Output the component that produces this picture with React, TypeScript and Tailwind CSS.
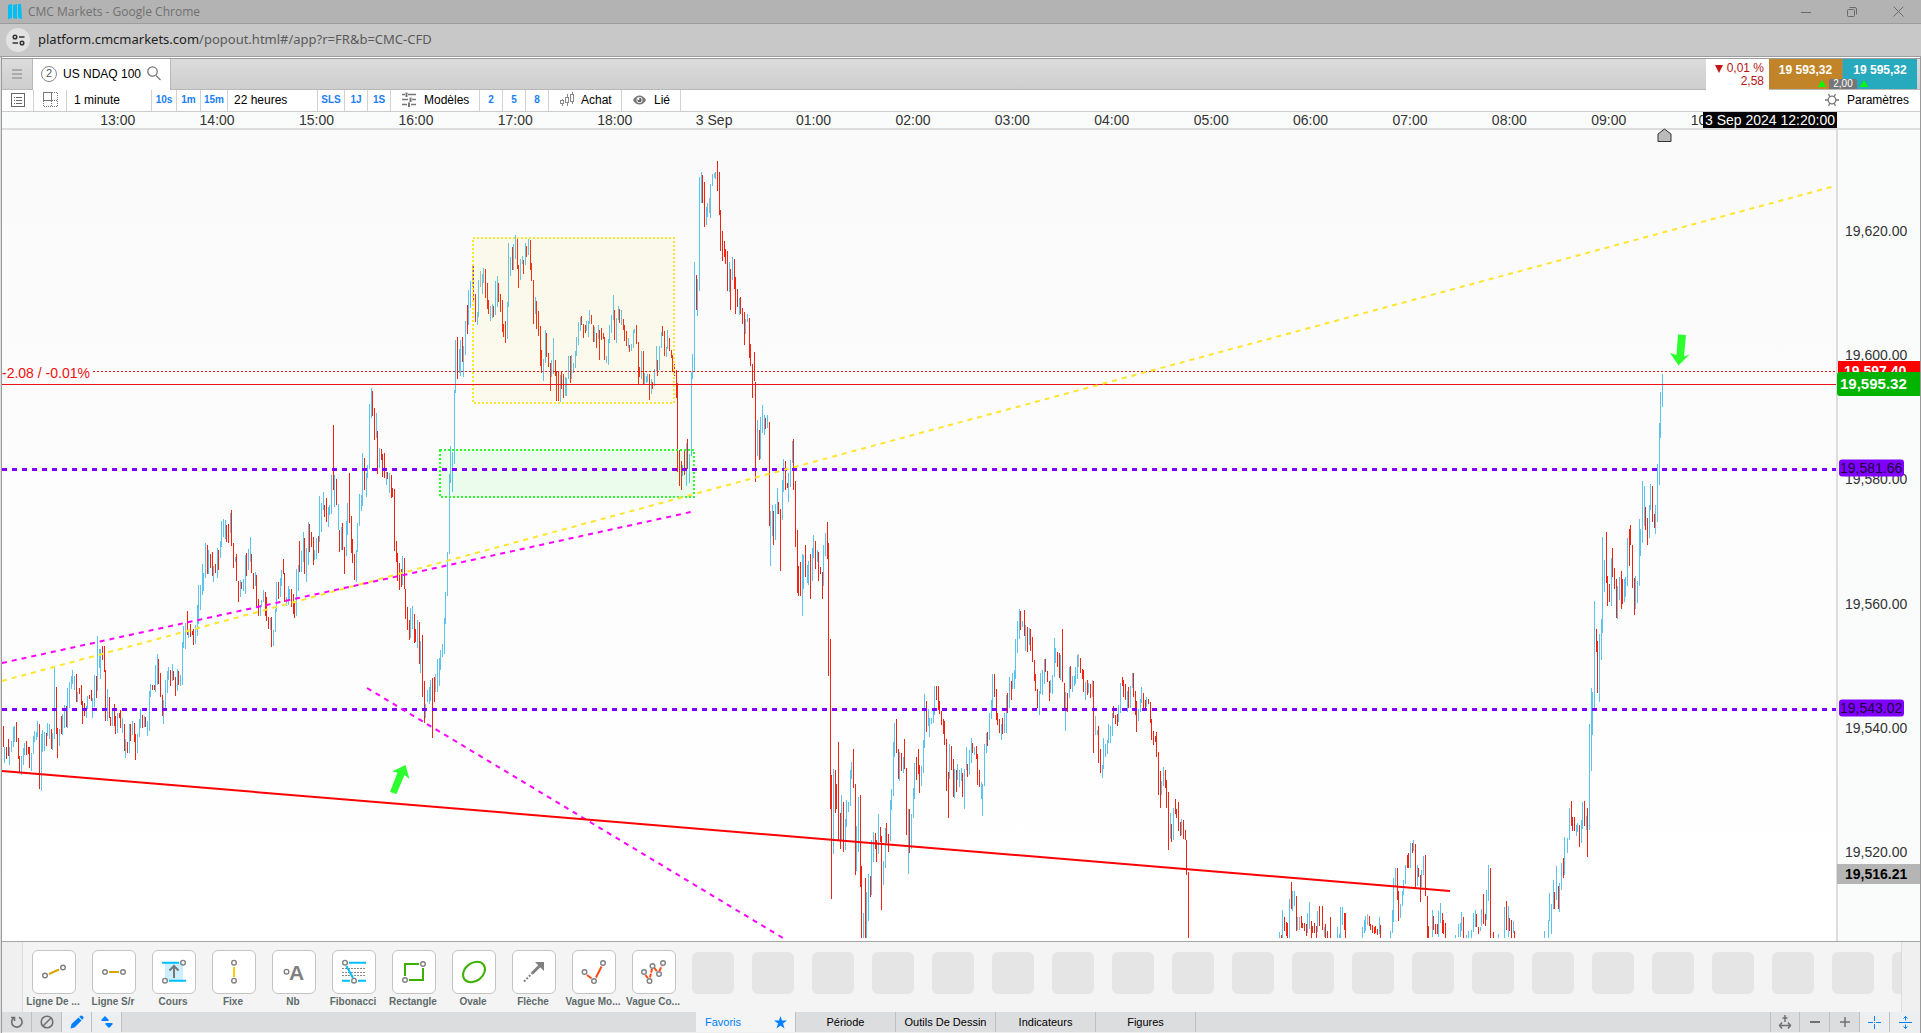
import React from "react";

type Block = { x: number; y: number; sx: number; sy: number; bars: string };

const BLOCKS: Block[] = [
  {
    x: 0, y: 360, sx: 3, sy: 3,
    bars: `d10 1098 1160; u13 1160 1208; d19 1161 1196; d25 1138 1187; u28 1160 1214; u34 1143 1176; u40 1101 1160; u43 1098 1147; d49 1086 1145; d55 1134 1196; d58 1188 1236; u64 1188 1244; u70 1163 1215; u73 1150 1185; d79 1144 1185; d85 1160 1182; d88 1161 1224; u94 1179 1232; u100 1128 1182; u103 1113 1145; u109 1116 1140; u112 1083 1131; d118 1092 1287; u124 1122 1293; u127 1110 1176; u133 1116 1173; d139 1119 1158; u142 1089 1128; u148 1092 1137; d154 1107 1166; u157 1119 1169; u163 923 1137; d169 981 1122; d172 1104 1194; u178 1107 1158; d184 1068 1122; u187 1062 1125; u193 1035 1104; d199 1038 1101; u202 984 1104; u208 966 1043; u214 948 987; u217 930 972; u223 948 990; d229 942 1026; u232 995 1026; d238 984 1002; d244 975 1034; d247 1024 1092; d253 1029 1068; u259 1038 1074; u262 1008 1046; d268 1005 1016; d274 990 1022; u277 1014 1074; u283 945 1041; d289 948 1014; u292 828 994; u298 867 924; u301 867 957; d307 858 900; d313 858 936; d316 930 1083; u322 987 1083; d328 1011 1074; d331 1071 1098; u337 1047 1098; d343 1032 1098; d346 1068 1122; u352 1060 1118; d358 1059 1075; d361 1050 1103; u367 1074 1119; d373 1092 1173; u376 1137 1194; d382 1146 1179; u388 1092 1179; d391 1092 1143; u397 1083 1125; d403 1089 1145; d406 1122 1200; u412 1122 1179; u418 1077 1131; u421 1047 1104; d427 1065 1104; u433 1068 1100; d436 1071 1101; u442 1083 1128; u448 993 1113; u451 972 1010; d457 975 991; d463 975 990; u466 915 996; u472 882 975; d475 897 972; d481 939 1011; d487 1005 1068; u490 1020 1092; u496 960 1046; u502 933 999; u505 921 959; d511 930 978; u517 912 963; d520 933 960; d526 951 1008; u532 927 993; d535 933 975; u541 945 978; u547 846 975; u550 797 864; u556 790 867; d562 753 825; u565 816 834; d571 792 831; d577 813 825; d580 807 855; u586 795 852; u592 735 828; u595 675 792; u601 675 750; u607 612 705; u610 639 693; u616 549 654; d622 555 642; u625 570 642; d631 582 624; d637 576 648; u640 618 666; d646 612 639; u652 564 654; d655 570 630; u661 543 594; u664 483 561; u670 477 531; u676 480 537; d679 495 546; d685 492 549; u691 459 519; d694 450 558; d700 549 624; u706 590 606; d709 582 663; d715 663 726; u721 660 711; d724 666 687; u730 657 693; u736 585 702; d739 579 648; u745 567 630; u751 531 606; d754 582 640; d760 639 687; u766 636 678; d769 645 738; d775 717 768; u781 735 768; u784 720 741; u790 690 726; d796 697 769; d799 711 783; d805 771 807; u811 775 810; d814 771 861; u820 810 858; u826 747 816; u829 666 756; d835 666 717; u841 654 711; u844 630 678; d850 597 642; d853 640 726; u859 711 738; u865 678 735; u868 687 720; d874 687 741; d880 702 762; d883 726 774; u889 627 768; u895 615 693; d898 543 636; u904 573 636; u910 516 606; d913 534 642; u919 564 666; u925 486 615; d928 492 576; d934 516 561; d940 531 615; u943 570 600; u949 534 597; d955 528 579; u958 408 546; u964 429 516; u970 396 450; d973 435 471; d979 414 486; u985 441 501; u988 435 465; u994 345 462; d1000 195 390; u1003 345 441; d1009 357 435; u1015 432 510; d1018 510 576; u1024 500 570; d1027 489 570; d1033 561 642; u1039 483 588; u1042 429 525; d1048 339 489; d1054 468 579; d1057 537 609; d1063 582 660; u1069 570 666; u1072 489 576; u1078 402 498; u1084 405 453; u1087 279 438; d1093 294 390; u1099 339 411; u1102 315 354; u1108 132 327; u1114 84 174; d1117 93 168; d1123 144 240; u1129 159 234; d1132 213 342; u1138 264 324; d1144 267 300; d1147 282 351; d1153 279 354; u1159 336 375; d1162 336 357; u1168 339 399; d1174 345 414; d1177 384 411; d1183 387 573; d1189 543 606; d1192 579 663; d1198 609 690; d1204 627 681; u1207 588 675; d1213 594 687; d1216 687 777; d1222 741 810; d1228 780 840; u1231 744 834; u1237 738 807; d1243 762 849; d1246 807 846; u1252 780 864; d1258 786 912; u1261 843 939; d1267 825 1011; d1273 963 1089; u1276 1032 1074; u1282 990 1026; u1288 981 1032; u1291 960 1022; d1297 954 1134; d1303 951 1026; g1306 942 996; u1312 897 996; u1318 894 978; u1321 870 930; u1327 852 891; u1333 774 882; u1336 696 792; u1342 576 708`,
  },
  {
    x: 430, y: 150, sx: 3, sy: 3,
    bars: `u58 972 1212; u61 888 998; u67 906 1026; u73 720 942; u76 570 729; d82 561 687; u88 597 669; u91 570 678; d97 561 636; u100 588 681; u106 513 615; d112 465 552; u115 420 525; u121 393 474; u127 348 411; d130 348 450; d136 432 516; u142 486 525; u145 390 500; g151 363 411; u157 372 432; u160 354 399; d166 357 444; d172 399 477; d175 450 492; u181 468 513; u187 462 504; d190 468 501; u196 393 495; u202 378 471; d205 399 456; d211 432 486; d217 450 546; d220 522 561; d226 513 579; u232 456 567; u235 279 471; u241 321 378; d247 291 360; u250 282 360; u256 255 327; d262 267 357; d265 345 414; u271 327 390; u277 318 342; d280 330 372; u286 279 345; d289 288 321; u295 267 315; d301 270 360; d304 339 393; d310 390 522; u316 441 492; d319 453 537; d325 483 558; d331 528 648; d334 600 669; u340 627 693; u346 540 639; d349 549 621; d355 609 651; d361 639 723; u364 630 681; u370 564 672; d376 630 678; d379 663 753; d385 666 753; u391 675 756; d394 666 717; d400 672 744; u406 681 738; u409 684 738; u415 618 687; d421 618 699; u424 615 687; u430 639 669; u436 603 654; u439 561 618; u445 516 585; u451 501 543; d454 498 525; d460 522 564; d466 525 549; u469 513 543; u475 513 561; u478 480 522; d484 495 522; d490 525 576; u493 531 576; d499 549 594; u505 525 567; d508 540 630; d514 534 570; d520 549 567; d523 561 630; u529 618 639; u535 567 645; u538 525 579; u544 495 549; u550 435 510; d553 480 570; u559 504 579; u565 468 510; d568 477 519; u574 480 525; d580 507 540; d583 525 573; d589 543 588; u595 564 594; d598 585 606; u604 582 603; u610 540 594; u613 537 549; d619 525 582; d625 576 702; d628 651 681; u634 603 687; d640 603 702; u643 669 702; u649 678 699; u652 672 696; d658 672 750; u664 687 732; d667 696 717; u673 657 708; u679 588 663; d682 630 678; u688 588 660; u694 546 594; d697 528 558; d703 543 618; u709 591 621; u712 540 597; d718 564 603; d724 600 624; d727 615 666; d733 642 678; d739 660 744; d742 699 966; d748 900 1008; d754 933 1020; u757 945 978; d763 900 975; u769 879 1008; d772 867 957; u778 912 999; u784 666 918; u787 612 687; u793 336 666; d799 375 480; u802 387 498; u808 81 423; u814 66 159; d817 75 159; d823 96 231; u829 171 225; u832 159 201; g838 144 189; u841 102 204; u847 72 108; g853 69 84; u856 66 87; d862 33 123; d868 66 195; d871 180 303; d877 243 333; d883 273 321; d886 297 342; d892 303 423; u898 336 426; d901 357 480; u907 321 390; d913 327 417; d916 381 492; d922 417 471; u928 444 495; d931 441 492; d937 474 522; d943 486 585; u946 507 552; u952 492 516; d958 504 624; d961 582 648; d967 642 744; d973 606 693; d976 696 996; u982 846 918; d988 849 930; u991 801 927; u997 765 849; u1003 795 855; d1006 804 837; u1012 795 834`,
  },
  {
    x: 700, y: 440, sx: 2.8, sy: 3,
    bars: `u154 -54 48; d156 -54 126; u162 -60 48; d167 -30 60; u170 -30 57; d195 -54 258; u198 213 378; u203 195 288; d206 213 315; u212 192 300; u217 144 222; d220 186 222; d226 207 393; u231 120 240; u234 57 156; d240 63 150; d245 129 144; u248 99 186; u254 60 141; u259 3 69; d262 -3 150; d268 123 321; d273 270 459; d276 378 468; d282 366 468; u287 342 528; u290 345 447; d296 315 411; u302 375 429; u304 363 435; d310 342 477; u315 324 423; u318 285 354; d324 303 387; u329 330 366; d332 336 423; d338 381 402; d343 396 477; u346 315 438; u352 279 348; d357 246 357; d360 309 708; d366 597 1107; d369 1005 1377; u374 987 1242; d380 990 1119; d383 1032 1107; d388 906 1200; d394 1119 1227; u397 1065 1200; d402 1086 1236; u408 1137 1230; u411 1080 1161; u416 1086 1116; u422 990 1098; u425 966 1017; d430 927 1044; d436 1032 1305; u439 1158 1293; u444 1071 1236; d450 1065 1341; d453 1278 1494; u458 1419 1494; d464 1314 1494; u467 1356 1494; u472 1302 1443; d478 1308 1371; u481 1200 1365; u486 1176 1266; d492 1179 1227; d495 1200 1266; u500 1122 1242; d506 1161 1206; d509 1188 1410; u514 1263 1335; u520 1164 1284; d523 1149 1209; d528 1182 1236; u534 1080 1203; u537 1047 1110; u542 906 1068; u545 849 951; d551 837 939; d556 927 1017; u559 936 1023; d565 939 993; u570 951 999; d573 897 987; d579 984 1185; u584 1107 1302; d587 1107 1239; u593 1122 1227; u598 1044 1134; u601 969 1077; d607 951 1020; d612 927 1002; d615 975 1059; u621 978 1038; u626 900 999; u629 762 924; d635 783 876; u640 807 858; u643 834 891; u649 834 852; u654 813 849; u657 738 825; d663 738 780; d668 738 810; d671 783 822; d677 813 855; d682 837 882; d685 843 915; d691 897 1053; d696 996 1134; u699 912 1017; d705 918 990; d710 957 1071; u713 987 1074; d719 990 1056; u721 972 1020; u727 990 1041; u733 984 1023; d735 999 1071; u741 987 1107; u747 921 990; d749 972 1011; u755 930 1005; u761 894 969; d763 909 939; u769 921 945; d775 918 957; d777 942 1035; d783 990 1041; u789 1026 1077; u791 1032 1128; u797 912 1038; u803 879 939; d805 876 918; u811 819 900; u817 780 837; u820 702 804; d825 702 771; d831 747 840; d833 819 855; d839 837 879; u845 852 900; d847 834 882; u853 819 879; u859 765 879; d861 759 819; u867 711 804; d873 723 780; u875 699 747; u881 690 747; u884 597 717; u889 543 639; u895 507 597; d898 513 570; u903 543 561; d909 510 588; u912 555 633; d917 561 636; u923 564 615; d926 567 633; d931 591 666; d937 660 723; d940 702 753; d945 747 804; u951 753 825; u954 699 762; u959 690 765; u965 657 732; d968 657 696; d973 693 726; d979 723 783; u982 720 759; u987 705 762; u993 594 711; u996 624 669; d1001 636 681; d1007 639 714; u1010 645 720; d1015 567 726; d1021 729 807; u1024 756 873; d1029 759 816; u1035 681 774; d1038 678 747; u1043 708 756; u1049 708 738; u1052 681 732; u1057 645 717; g1060 642 681; d1066 654 699; d1071 687 717; d1074 690 756; u1080 726 780; d1085 720 765; u1088 729 759; d1094 732 774; g1099 720 770; d1102 723 939; g1108 828 885; u1113 870 886; d1116 858 969; d1122 927 999; u1127 975 1014; u1130 894 987; u1136 912 951; u1141 900 942; u1144 852 909; u1150 858 909; u1155 819 888; d1158 798 834; d1164 825 852; d1169 822 858; u1172 795 846; u1178 729 819; d1183 711 738; d1186 720 771; d1192 732 780; u1197 753 816; d1200 741 804; u1206 738 804; u1211 699 744; d1214 699 771; d1220 753 825; d1222 783 876; u1228 807 843; u1234 777 816; u1237 741 789; d1242 759 804; d1248 780 810; u1250 771 801; d1256 777 792; d1262 786 849; d1265 837 900; d1270 873 915; d1276 888 906; d1279 876 951; d1284 936 1065; d1290 993 1104; u1293 1023 1065; u1298 981 1038; d1304 990 1044; d1307 1020 1104; d1312 1056 1230; u1318 1119 1197; d1321 1152 1206; u1326 1104 1200; d1332 1077 1122; d1335 1107 1134; d1340 1086 1173; d1346 1146 1188; u1349 1137 1185; d1354 1140 1197; d1360 1170 1200; d1363 1200 1305; d1368 1296 1494`,
  },
  {
    x: 1240, y: 340, sx: 2.3025, sy: 2.6133,
    bars: `u91 1547 1563; d96 1554 1563; u98 1490 1563; d102 1508 1544; d107 1522 1557; d110 1523 1563; u114 1461 1563; d118 1416 1487; u121 1440 1492; u126 1440 1479; d130 1453 1544; u133 1508 1542; g137 1508 1542; d142 1505 1537; d144 1523 1537; d149 1524 1544; d153 1526 1557; u156 1497 1550; u160 1469 1539; d165 1518 1563; d167 1531 1550; d172 1524 1550; d177 1531 1563; u179 1492 1547; d184 1479 1531; d190 1479 1542; u194 1534 1560; d197 1526 1563; d202 1544 1563; d209 1508 1563; u225 1534 1563; u229 1552 1563; u232 1482 1563; u236 1482 1529; d240 1497 1542; d243 1497 1563; u282 1534 1563; u286 1516 1550; u289 1505 1544; g293 1500 1530; d298 1505 1531; d300 1526 1542; d305 1529 1550; d310 1534 1552; d312 1531 1550; d317 1539 1555; u321 1508 1552; d323 1529 1563; u347 1544 1563; u351 1490 1550; u354 1406 1521; u358 1380 1430; d362 1380 1463; d365 1440 1518; u370 1474 1511; u374 1440 1480; u377 1411 1450; u381 1372 1422; d386 1346 1380; d388 1341 1380; u393 1315 1380; d397 1315 1341; u400 1307 1336; d404 1317 1430; u408 1372 1427; d411 1380 1403; d416 1398 1469; u419 1385 1430; u423 1348 1398; d427 1346 1453; d432 1453 1563; d434 1531 1563; u444 1490 1560; d446 1505 1543; d450 1526 1552; d455 1526 1552; u457 1492 1560; u462 1471 1524; d467 1497 1550; d469 1516 1552; d474 1524 1563; u497 1555 1563; u503 1526 1560; u507 1523 1560; u510 1495 1545; d515 1508 1563; u521 1555 1563; u526 1544 1563; u533 1542 1563; u538 1497 1547; u542 1490 1534; d545 1500 1535; d549 1534 1552; u553 1534 1545; u556 1487 1532; d561 1448 1526; d565 1500 1531; u568 1437 1516; u572 1372 1466; d577 1380 1563; d584 1548 1563; u595 1552 1563; u609 1482 1563; d614 1466 1542; u618 1479 1560; d621 1511 1544; d625 1516 1563; u630 1518 1550; d632 1544 1563; u702 1544 1563; u711 1516 1563; u713 1445 1518; u717 1474 1552; u722 1411 1487; d724 1443 1487; u729 1375 1463; d733 1427 1487; u736 1419 1495; u740 1367 1437; d745 1354 1406; u747 1299 1398; u753 1301 1341; u759 1223 1307; d763 1205 1270; d765 1247 1283; d770 1247 1283; u775 1268 1296; u777 1262 1286; d782 1268 1325; u786 1255 1315; u789 1207 1278; d793 1205 1270; u798 1244 1281; d800 1223 1351; u805 1004 1281; u809 909 1126; u812 920 1032; u816 682 966; d821 755 815; d823 787 923; u828 768 945; u832 729 836; u835 515 766; u839 575 659; d844 502 635; d846 617 695; d851 638 685; u855 570 695; d858 544 619; d862 596 651; d867 625 727; u869 643 729; u874 619 679; d879 604 703; d881 625 690; u886 625 685; u888 619 672; u892 517 643; d897 494 591; d899 483 536; d904 536 648; d908 622 719; u911 617 703; u915 630 687; u920 468 643; u922 494 564; u927 368 531; u931 382 486; d934 436 497; d938 465 536; u943 431 517; u945 376 444; d950 382 476; d954 455 491; u957 431 507; u961 324 476; u966 217 379; u968 136 256; u973 89 175`,
  },
];

const TOP = 130;
const HEIGHT = 811;

function barsPath(kind: string) {
  return BLOCKS.map((b) =>
    b.bars
      .split(";")
      .map((s) => s.trim())
      .filter((s) => s[0] === kind)
      .map((s) => {
        const [x, a, z] = s.slice(1).split(" ").map(Number);
        const px = Math.floor(b.x + x / b.sx) + 0.5;
        return `M${px} ${Math.round(b.y + a / b.sy)}V${Math.round(b.y + z / b.sy)}`;
      })
      .join("")
  ).join("");
}

const yOf = (price: number) => 355 + (19600 - price) * 6.21;
const pct = (y: number) => `${((y - TOP) / HEIGHT) * 100}%`;

const HOURS = ["13:00", "14:00", "15:00", "16:00", "17:00", "18:00", "3 Sep", "01:00", "02:00", "03:00", "04:00", "05:00", "06:00", "07:00", "08:00", "09:00", "10:00"];
const TICKS = ["19,620.00", "19,600.00", "19,580.00", "19,560.00", "19,540.00", "19,520.00"];

function Chart() {
  return (
    <svg className="block h-full w-full overflow-visible" viewBox={`2 ${TOP} 1834 ${HEIGHT}`} preserveAspectRatio="none" fill="none" role="img" aria-label="US NDAQ 100">
      <g shapeRendering="crispEdges">
        <path d={barsPath("u")} stroke="#5cc3ec" />
        <path d={barsPath("d")} stroke="#f02410" />
        <path d={barsPath("g")} stroke="#b4b4b4" />
        <rect x="473" y="238" width="201" height="165" fill="#ffe62e" fillOpacity="0.08" stroke="#ffe62e" strokeWidth="2" strokeDasharray="2 2" />
        <rect x="440" y="450" width="254" height="47" fill="#2eff2e" fillOpacity="0.08" stroke="#2eff2e" strokeWidth="2" strokeDasharray="2 2" />
        <path d="M93 371.5H1836" stroke="#e01515" strokeDasharray="2 2" />
        <path d="M2 384.5H1836" stroke="#e8151b" />
        <path d="M2 469.5H1836M2 709.5H1836" stroke="#8000ff" strokeWidth="3" strokeDasharray="5 5" />
      </g>
      <path d="M2 681L1835 186" stroke="#ffe62e" strokeWidth="2" strokeDasharray="5 5" />
      <path d="M2 663L691 512M367 688L783 938" stroke="#ff00ff" strokeWidth="2" strokeDasharray="5 5" />
      <path d="M2 771L1450 891" stroke="#ff0000" strokeWidth="2" />
      <path d="M405.500 765L392 771.500L397.500 772.500L390 792L396.500 794L404.500 775L409.500 779Z" fill="#2eff2e" />
      <path d="M1678.500 365.500L1670 353L1676.500 355L1678 334.500L1686 335L1684 356.500L1689.500 354.500Z" fill="#2eff2e" />
      <path d="M1658 141.500V134L1664.500 129L1671 134V141.500Z" fill="#bbbbbb" stroke="#333" />
    </svg>
  );
}

const sep = "border-r border-[#d2d2d2]";
const cell = "flex h-full shrink-0 items-center whitespace-nowrap pb-0.5";
const quick = "justify-center text-[10px] font-bold text-[#1a80f5]";

function Toolbar() {
  return (
    <div className="flex h-[22px] items-stretch border-b border-[#cccccc] bg-white text-xs text-black">
      <button aria-label="Liste" className={`${cell} ${sep} w-8 justify-center`}>
        <svg width="14" height="14" viewBox="0 0 14 14" fill="none" stroke="#666" shapeRendering="crispEdges">
          <path d="M.5 .5H13.500V13.500H.5ZM3 4.500H4M5 4.500H11M3 7.500H4M5 7.500H11M3 10.500H4M5 10.500H11" />
        </svg>
      </button>
      <button aria-label="Disposition" className={`${cell} ${sep} w-[33px] justify-center`}>
        <svg width="15" height="15" viewBox="0 0 15 15" fill="none" stroke="#777" shapeRendering="crispEdges">
          <path d="M.5 .5H8.500V8.500H.5Z" />
          <path d="M9 .5H14.500V14.500H.5V9M8.500 9V14M9 8.500H14" strokeDasharray="1 1" />
        </svg>
      </button>
      <button className={`${cell} ${sep} w-[85px] pl-[7px]`}>1 minute</button>
      <button className={`${cell} ${sep} ${quick} w-[25px]`}>10s</button>
      <button className={`${cell} ${sep} ${quick} w-6`}>1m</button>
      <button className={`${cell} ${sep} ${quick} w-[27px]`}>15m</button>
      <button className={`${cell} ${sep} w-[90px] pl-1.5`}>22 heures</button>
      <button className={`${cell} ${sep} ${quick} w-[27px]`}>SLS</button>
      <button className={`${cell} ${sep} ${quick} w-[23px]`}>1J</button>
      <button className={`${cell} ${sep} ${quick} w-[23px]`}>1S</button>
      <button className={`${cell} ${sep} w-[89px] gap-2 pl-[11px]`}>
        <svg width="14" height="15" viewBox="0 0 14 15" fill="none" stroke="#777" strokeWidth="2">
          <path d="M0 2.500H3M6 2.500H14M0 7.500H6M10 7.500H14M0 12.500H5M9 12.500H14" strokeWidth="1.500" />
          <path d="M4.500 .5V5M8.500 5.500V10M7 10.500V15" />
        </svg>
        Modèles
      </button>
      <button className={`${cell} ${sep} ${quick} w-[23px]`}>2</button>
      <button className={`${cell} ${sep} ${quick} w-[23px]`}>5</button>
      <button className={`${cell} ${sep} ${quick} w-[23px]`}>8</button>
      <button className={`${cell} ${sep} w-[73px] gap-1.5 pl-[11px]`}>
        <svg width="15" height="15" viewBox="0 0 15 15" fill="none" stroke="#888" shapeRendering="crispEdges">
          <path d="M.5 8.500H3.500V11.500H.5ZM5.500 5.500H8.500V10.500H5.500ZM10.500 2.500H13.500V9.500H10.500ZM2.500 7V8M2.500 12V14M7.500 2V5M7.500 11V14M12.500 0V2M12.500 10V12" />
        </svg>
        Achat
      </button>
      <button className={`${cell} ${sep} w-[59px] gap-2 pl-[11px]`}>
        <svg className="shrink-0" width="13" height="10" viewBox="0 0 13 10">
          <path d="M0 5C3 -1 10 -1 13 5C10 11 3 11 0 5Z" fill="#777" />
          <circle cx="6.500" cy="5" r="3" fill="#fff" />
          <circle cx="6.500" cy="5" r="2.200" fill="#666" />
          <circle cx="5.500" cy="4" r="1" fill="#fff" />
        </svg>
        Lié
      </button>
      <button className={`${cell} ml-auto gap-2 pr-[11px]`}>
        <svg width="14" height="14" viewBox="0 0 14 14" fill="none" stroke="#777" strokeWidth="1.300">
          <circle cx="7" cy="7" r="3.800" />
          <path d="M0 7H3M11 7H14M3.500 1L5 4M10.500 1L9 4M3.500 13L5 10M10.500 13L9 10" />
        </svg>
        Paramètres
      </button>
    </div>
  );
}

function Dot({ x, y }: { x: number; y: number }) {
  return <circle cx={x} cy={y} r="2.300" stroke="#808080" strokeWidth="1.400" />;
}

const TOOLS: { label: string; icon: React.ReactNode }[] = [
  { label: "Ligne De ...", icon: <><Dot x={13} y={25.5} /><Dot x={31} y={17.5} /><path d="M17 24L27 19.500" stroke="#dba400" /></> },
  { label: "Ligne S/r", icon: <><Dot x={13} y={22} /><Dot x={31} y={22} /><path d="M17 22H27" stroke="#dba400" /></> },
  {
    label: "Cours",
    icon: <><path d="M13 13H31V30H13Z" fill="#ccefff" /><path d="M10 12.700H27M17 30.700H34" stroke="#00bfff" /><Dot x={31} y={12.7} /><Dot x={13} y={30.7} /><path d="M22 28V16M17.500 20.500L22 16L26.500 20.500" stroke="#777" /></>,
  },
  { label: "Fixe", icon: <><Dot x={22} y={12.7} /><Dot x={22} y={30.7} /><path d="M22 17V27" stroke="#fc0" /></> },
  { label: "Nb", icon: <><Dot x={14.5} y={21.7} /><text x="17" y="30" fontSize="21" fontWeight="bold" fill="#808080">A</text></> },
  {
    label: "Fibonacci",
    icon: <><path d="M10 18.500H34M10 22.500H34M10 25.500H34" stroke="#888" strokeWidth="1" strokeDasharray="2 1" shapeRendering="crispEdges" /><path d="M17 12.700H34M10 30.700H18M26 30.700H34M14.500 16L21 28" stroke="#00bfff" /><Dot x={13} y={12.7} /><Dot x={22} y={30.7} /></>,
  },
  { label: "Rectangle", icon: <><path d="M13 26V14H27M31 18V30H17" stroke="#3cb000" /><Dot x={31} y={14} /><Dot x={13} y={30} /></> },
  { label: "Ovale", icon: <ellipse cx="22" cy="22" rx="12" ry="9" transform="rotate(-38 22 22)" stroke="#3cb000" /> },
  { label: "Flèche", icon: <><path d="M12 31.500L20 23.500" stroke="#808080" strokeDasharray="2 1.500" /><path d="M20 23.500L29 14.500" stroke="#808080" strokeWidth="3" /><path d="M23 12H32V21Z" fill="#808080" /></> },
  { label: "Vague Mo...", icon: <><path d="M15 25L19.500 28.500M24 27.500L29.500 16.500" stroke="#ff4a10" /><Dot x={12.5} y={22} /><Dot x={22} y={31} /><Dot x={31} y={13} /></> },
  { label: "Vague Co...", icon: <><path d="M13.500 25L16 28.500M18 27.500L20 19M22.500 18L25 21.500M27.500 21L29.500 16" stroke="#ff4a10" strokeDasharray="4 1" /><Dot x={12} y={22} /><Dot x={17.5} y={31} /><Dot x={20.5} y={16} /><Dot x={27} y={24} /><Dot x={31} y={13} /></> },
];

function DrawingBar() {
  return (
    <div className="flex h-[71px] border-t border-[#a5a8a5] bg-[#f4f4f4]">
      <div className="w-[21px] shrink-0 border-r border-[#dcdcdc] bg-[#f0f0f0]" />
      <div className="flex min-w-0 flex-1 overflow-hidden">
        {TOOLS.map((t) => (
          <button key={t.label} className="flex w-[60px] shrink-0 flex-col items-center gap-px pt-2">
            <span className="ml-0.5 size-11 rounded-md border border-[#c4c4c4] bg-white">
              <svg className="size-[42px]" viewBox="1 1 42 42" fill="none" strokeWidth="2">{t.icon}</svg>
            </span>
            <span className="whitespace-nowrap text-[10px] leading-[14px] font-bold text-[#5f6b6b]">{t.label}</span>
          </button>
        ))}
        {Array.from({ length: 21 }, (_, i) => (
          <span key={i} className="mt-2.5 mr-[9px] ml-[9px] h-[42px] w-[42px] shrink-0 rounded-md bg-[#e5e5e5]" />
        ))}
      </div>
      <div className="w-[19px] shrink-0 border-l border-[#dcdcdc] bg-[#f0f0f0]" />
    </div>
  );
}

const tab = "w-[100px] border-r border-[#bdbfc0]";
const tool = "flex w-[30px] items-center justify-center border-r border-[#bdbfc0]";

function BottomBar() {
  return (
    <div className="flex h-[21px] border-b border-[#efefef] bg-[#dcdddf] text-[11px] text-black">
      <div className="flex flex-1">
        <button aria-label="Actualiser" className={tool}>
          <svg width="14" height="14" viewBox="0 0 14 14" fill="none" stroke="#707070" strokeWidth="1.600"><path d="M3.500 3A5.200 5.200 0 1 0 9 2.200M1 2.500H4.500V6" /></svg>
        </button>
        <button aria-label="Masquer" className={tool}>
          <svg width="14" height="14" viewBox="0 0 14 14" fill="none" stroke="#707070" strokeWidth="1.600"><circle cx="7" cy="7" r="5.800" /><path d="M3 11L11 3" /></svg>
        </button>
        <button aria-label="Dessiner" className={`${tool} bg-[#eceef0]`}>
          <svg width="14" height="14" viewBox="0 0 14 14" fill="#0080ff"><path d="M.5 13.500L1.500 9L8.500 2.500L11.500 5.500L4.500 12.500ZM9.300 1.800L10.500 .7Q11.500 0 12.500 1L13.200 1.700Q14 2.500 13.200 3.500L12.200 4.700Z" /></svg>
        </button>
        <button aria-label="Ordre" className={`${tool} bg-[#eceef0]`}>
          <svg width="12" height="12" viewBox="0 0 12 12" fill="#0080ff"><path d="M4 0L7.500 3.500V5H.5V3.500ZM8 12L4.500 8.500V7H11.500V8.500Z" /></svg>
        </button>
      </div>
      <div role="tablist" className="flex">
        <button role="tab" aria-selected="true" className={`${tab} flex items-center justify-between bg-[#f4f4f4] pr-2 pl-[9px] text-[#0080ff]`}>
          Favoris
          <svg width="13" height="13" viewBox="0 0 13 13" fill="#0080ff"><path d="M6.500 0L8 4.500H13L9 7.500L10.500 12.500L6.500 9.500L2.500 12.500L4 7.500L0 4.500H5Z" /></svg>
        </button>
        <button role="tab" className={tab}>Période</button>
        <button role="tab" className={tab}>Outils De Dessin</button>
        <button role="tab" className={tab}>Indicateurs</button>
        <button role="tab" className={tab}>Figures</button>
      </div>
      <div className="flex grow basis-[30px] justify-end">
        <button aria-label="Ajuster" className={`${tool} border-l`}>
          <svg width="14" height="14" viewBox="0 0 14 14" fill="none" stroke="#707070" strokeWidth="1.500"><path d="M7 0V7M4.500 3H9.500M1.500 10.500H12.500M4 7.500L1.500 10.500L4 13.500M10 7.500L12.500 10.500L10 13.500" /></svg>
        </button>
        <button aria-label="Zoom arrière" className={tool}>
          <svg width="10" height="10" viewBox="0 0 10 10" stroke="#707070" strokeWidth="2"><path d="M0 5H10" /></svg>
        </button>
        <button aria-label="Zoom avant" className={tool}>
          <svg width="10" height="10" viewBox="0 0 10 10" stroke="#707070" strokeWidth="1.500"><path d="M0 5H10M5 0V10" /></svg>
        </button>
        <button aria-label="Réticule" className={`${tool} bg-[#eceef0]`}>
          <svg width="13" height="13" viewBox="0 0 13 13" stroke="#0080ff" shapeRendering="crispEdges"><path d="M0 6.500H5M8 6.500H13M6.500 0V5M6.500 8V13M6 6.500H7" /></svg>
        </button>
        <button aria-label="Écarter" className={`${tool} border-r-0 bg-[#eceef0]`}>
          <svg width="13" height="13" viewBox="0 0 13 13" fill="none" stroke="#0080ff"><path d="M0 6.500H13M6.500 .5V4.500M4.500 2.500L6.500 .5L8.500 2.500M6.500 8.500V12.500M4.500 10.500L6.500 12.500L8.500 10.500" /></svg>
        </button>
      </div>
    </div>
  );
}

function PriceAxis() {
  return (
    <div className="relative w-[84px] shrink-0 border-l-2 border-[#dddddd] bg-[#fafcfb] text-sm leading-4 text-[#333]">
      <div className="flex h-full flex-col justify-between pt-[93px] pb-[81px] pl-[7px]">
        {TICKS.map((t) => (
          <span key={t}>{t}</span>
        ))}
      </div>
      <div className="absolute right-0 left-0 -translate-y-1/2 bg-[#ff0000] pl-[6px] leading-5 font-bold text-white" style={{ top: pct(yOf(19597.4)) }}>19,597.40</div>
      <div className="absolute right-0 -left-px -translate-y-1/2 rounded-l-[3px] bg-[#00b400] pl-[3px] text-[15px] leading-6 font-bold text-white" style={{ top: pct(yOf(19595.32)) }}>19,595.32</div>
      <div className="absolute left-px w-[65px] -translate-y-1/2 rounded-[3px] bg-[#8000ff] pl-px leading-[17px] text-[#1c0038]" style={{ top: pct(yOf(19581.66) - 1) }}>19,581.66</div>
      <div className="absolute left-px w-[65px] -translate-y-1/2 rounded-[3px] bg-[#8000ff] pl-px leading-[17px] text-[#1c0038]" style={{ top: pct(yOf(19543.02) - 1) }}>19,543.02</div>
      <div className="absolute right-0 -left-px -translate-y-1/2 bg-[#b5b5b5] pl-[8px] leading-5 font-bold text-black" style={{ top: pct(yOf(19516.21) - 1) }}>19,516.21</div>
    </div>
  );
}

export default function App() {
  return (
    <div className="flex h-screen flex-col bg-[#dedede] font-['Liberation_Sans',Arial,sans-serif]">
      <header className="flex h-6 shrink-0 items-center border-b border-[#9c9c9c] bg-[#b3b3b3] pl-2 font-['Open_Sans',sans-serif] text-xs text-[#707070]">
        <svg width="14" height="15" viewBox="0 0 14 15" fill="#00bff5"><path d="M0 1L4 0V14L0 15ZM5 1L9 0V15L5 14ZM10 0H13L14 15L10 14Z" /></svg>
        <span className="ml-1.5">CMC Markets - Google Chrome</span>
        <div className="ml-auto flex items-center text-[#6a6a6a]">
          <button aria-label="Réduire" className="flex w-[46px] justify-center"><svg width="10" height="10" viewBox="0 0 10 10" stroke="currentColor" shapeRendering="crispEdges"><path d="M0 5.500H10" /></svg></button>
          <button aria-label="Restaurer" className="flex w-[46px] justify-center"><svg width="10" height="10" viewBox="0 0 10 10" fill="none" stroke="currentColor"><rect x=".5" y="2.500" width="7" height="7" rx="1" /><path d="M2.500 .5H8Q9.500 .5 9.500 2V7.500" /></svg></button>
          <button aria-label="Fermer" className="flex w-[46px] justify-center"><svg width="11" height="11" viewBox="0 0 11 11" stroke="currentColor"><path d="M.5 .5L10.500 10.500M10.500 .5L.5 10.500" /></svg></button>
        </div>
      </header>
      <div className="flex h-[33px] shrink-0 items-center border-b border-[#9c9c9c] bg-[#c8c8c8] pl-1.5 font-['Noto_Sans',sans-serif] text-[13px]">
        <button aria-label="Informations du site" className="flex size-6 items-center justify-center rounded-full bg-[#e2e2e2]">
          <svg width="13" height="12" viewBox="0 0 13 12" fill="none" stroke="#333" strokeWidth="1.500"><circle cx="3" cy="3" r="1.800" /><path d="M7 3H12.500M.5 9H6" /><circle cx="10" cy="9" r="1.800" /></svg>
        </button>
        <span className="ml-2 text-[#5a5a5a]"><span className="text-[#1e1e1e]">platform.cmcmarkets.com</span>/popout.html#/app?r=FR&amp;b=CMC-CFD</span>
      </div>
      <main className="ml-px flex min-h-0 flex-1 flex-col border-x border-[#999999] bg-white">
        <div className="mt-px flex h-8 shrink-0 items-stretch border-y border-t-[#9c9c9c] border-b-[#b8b8b8] bg-linear-to-b from-[#dcdcdc] to-[#cecece]">
          <button aria-label="Menu" className="flex w-[31px] items-center justify-center border-r border-[#b8b8b8]">
            <svg width="10" height="11" viewBox="0 0 10 11" stroke="#aaa" strokeWidth="2" shapeRendering="crispEdges"><path d="M0 1H10M0 5H10M0 9H10" /></svg>
          </button>
          <button className="-mb-px flex w-[138px] items-center border-r border-[#b8b8b8] bg-white pb-0.5 pl-2 text-xs text-black">
            <span className="flex size-4 items-center justify-center rounded-full border border-[#888] text-[11px] text-[#555]">2</span>
            <span className="ml-1.5 whitespace-nowrap">US NDAQ 100</span>
            <svg className="ml-1.5" width="14" height="15" viewBox="0 0 14 15" fill="none" stroke="#777" strokeWidth="1.300"><circle cx="5.500" cy="5.500" r="4.700" /><path d="M9 9.500L13.500 14" /></svg>
          </button>
          <div className="-mb-px ml-auto w-[63px] bg-white pr-[5px] text-right text-xs leading-[13px] text-[#b81414]">
            <div className="mt-[3px] flex items-center justify-end gap-1 whitespace-nowrap">
              <svg width="8" height="8" viewBox="0 0 8 8" fill="#c41414"><path d="M0 0H8L4 8Z" /></svg>
              0,01 %
            </div>
            <div>2,58</div>
          </div>
          <div className="relative mr-[3px] flex text-xs leading-[22px] font-bold text-white">
            <button className="flex w-[74px] items-start justify-center border-r border-[#8f8f7c] bg-[#c28428]">19 593,32</button>
            <button className="flex w-[74px] items-start justify-center bg-[#28aabe]">19 595,32</button>
            <span className="absolute bottom-0 left-[60px] w-7 rounded-t-[2px] bg-[#767678] text-center text-[10px] leading-[10px] font-normal">2,00</span>
            <svg className="absolute bottom-0.5 left-[49px]" width="50" height="7" viewBox="0 0 50 7" fill="#00ff00"><path d="M0 7L4 0L8 7ZM42 7L46 0L50 7Z" /></svg>
          </div>
        </div>
        <Toolbar />
        <div className="relative flex h-[18px] shrink-0 border-b-2 border-[#dddddd] bg-[#fafcfb] pr-[162px] pl-[66px] text-sm leading-4 text-[#333]">
          {HOURS.map((h) => (
            <span key={h} className="flex-1 text-center">{h}</span>
          ))}
          <span className="absolute top-0 right-[83px] w-[134px] bg-black pl-0.5 whitespace-nowrap text-white">3 Sep 2024 12:20:00</span>
        </div>
        <div className="flex min-h-0 flex-1">
          <div className="relative min-w-0 flex-1 bg-linear-to-b from-[#fafafa] to-white">
            <div className="absolute inset-0"><Chart /></div>
            <span className="absolute left-0 -translate-y-1/2 text-sm leading-4 text-[#f01010]" style={{ top: pct(373) }}>-2.08 / -0.01%</span>
          </div>
          <PriceAxis />
        </div>
        <DrawingBar />
        <BottomBar />
      </main>
    </div>
  );
}
